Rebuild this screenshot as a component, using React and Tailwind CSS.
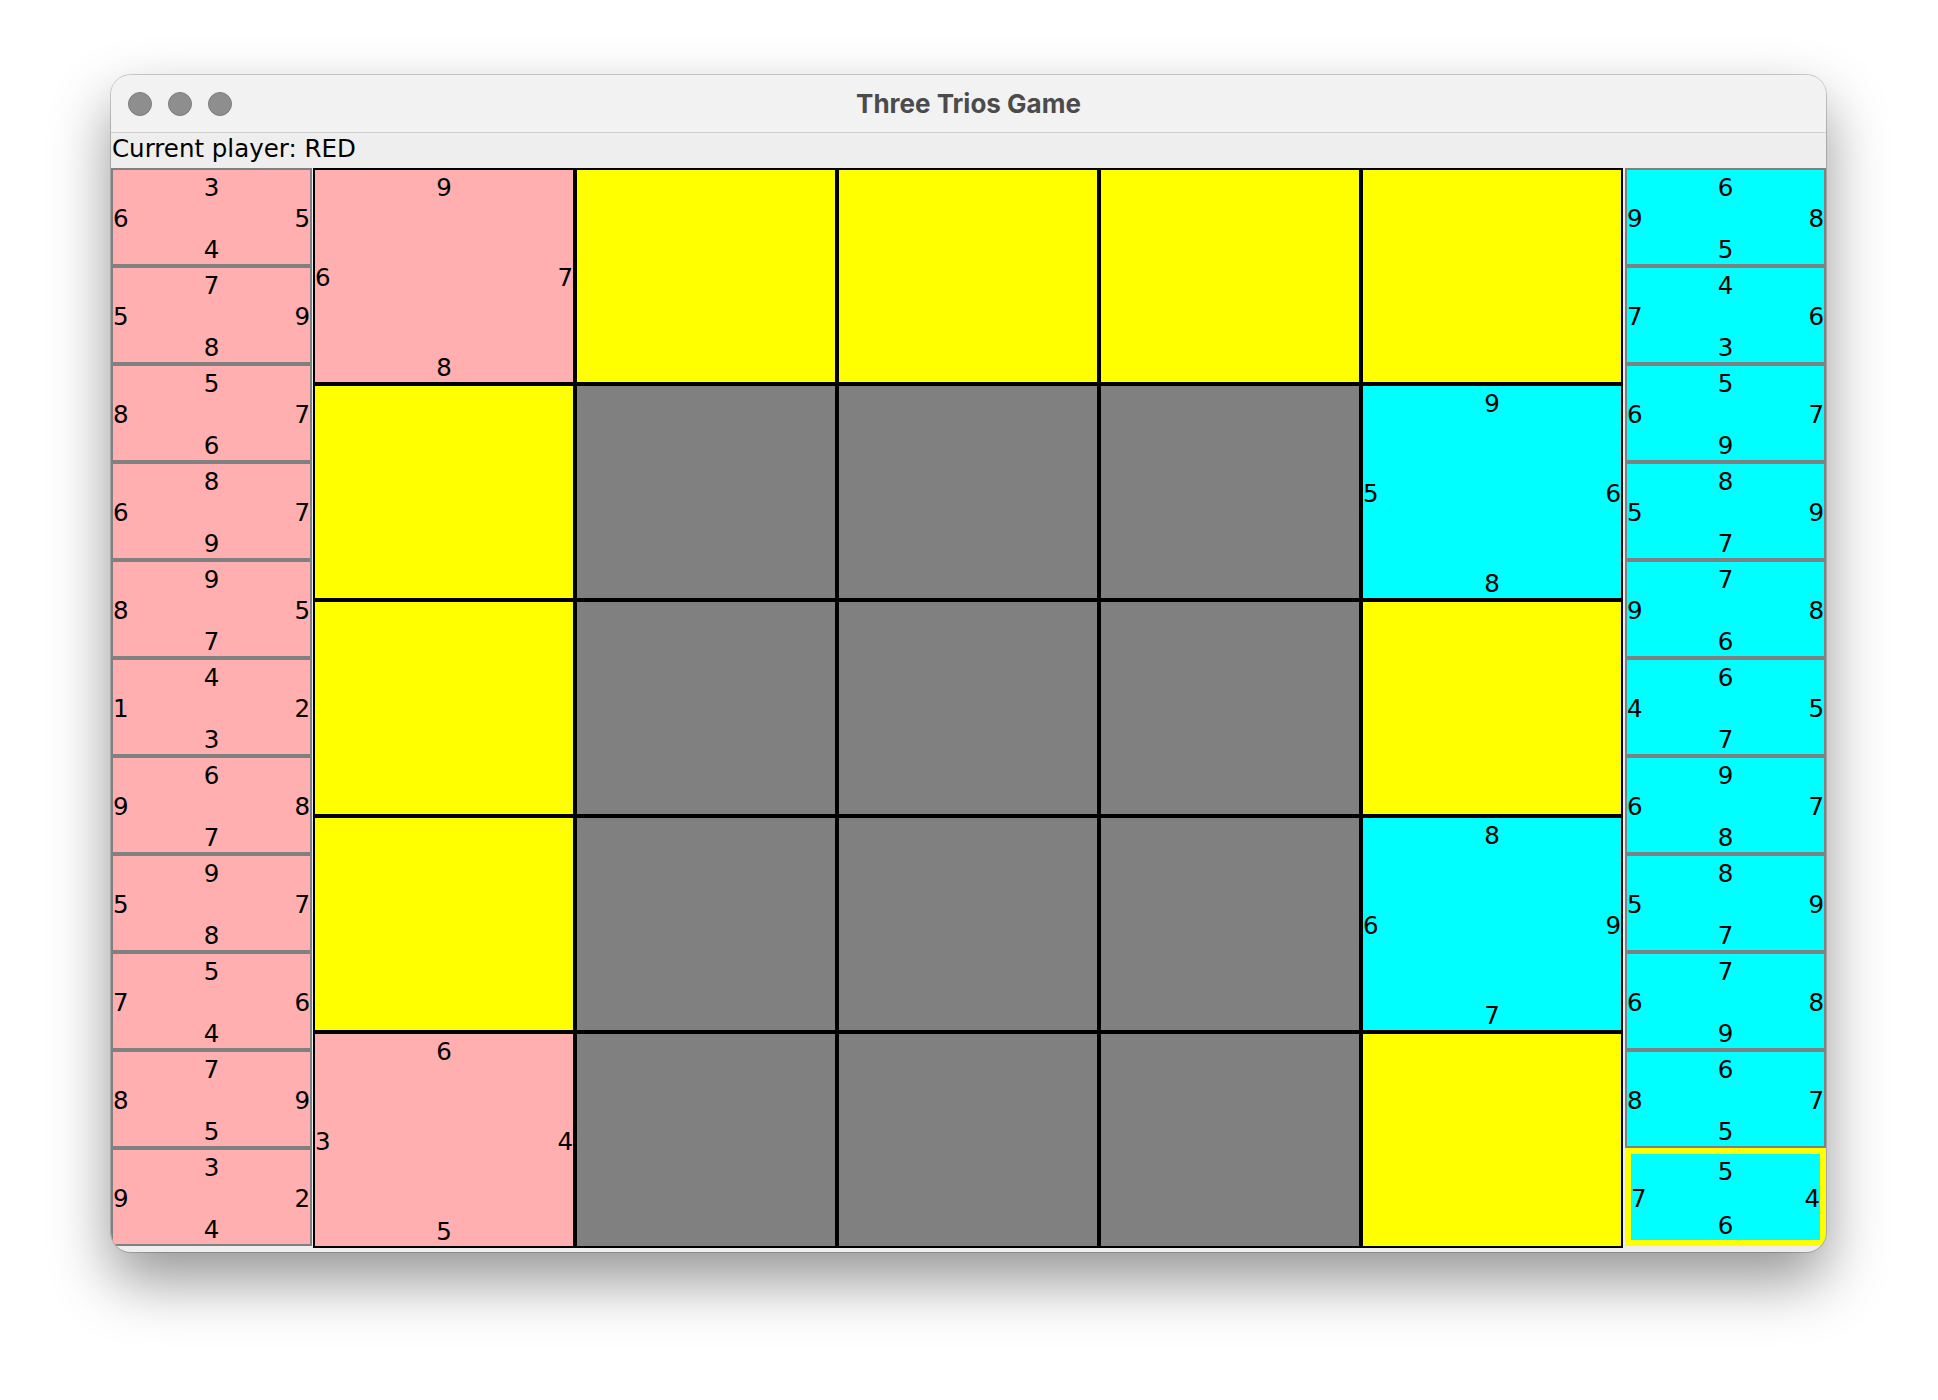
import React from "react";

const RED = "bg-[#ffafaf]";
const BLUE = "bg-[#00ffff]";

const leftHand = [
  [3, 6, 5, 4],
  [7, 5, 9, 8],
  [5, 8, 7, 6],
  [8, 6, 7, 9],
  [9, 8, 5, 7],
  [4, 1, 2, 3],
  [6, 9, 8, 7],
  [9, 5, 7, 8],
  [5, 7, 6, 4],
  [7, 8, 9, 5],
  [3, 9, 2, 4],
];

const rightHand = [
  [6, 9, 8, 5],
  [4, 7, 6, 3],
  [5, 6, 7, 9],
  [8, 5, 9, 7],
  [7, 9, 8, 6],
  [6, 4, 5, 7],
  [9, 6, 7, 8],
  [8, 5, 9, 7],
  [7, 6, 8, 9],
  [6, 8, 7, 5],
  [5, 7, 4, 6],
];

const board = [
  [{ r: [9, 6, 7, 8] }, "Y", "Y", "Y", "Y"],
  ["Y", "G", "G", "G", { b: [9, 5, 6, 8] }],
  ["Y", "G", "G", "G", "Y"],
  ["Y", "G", "G", "G", { b: [8, 6, 9, 7] }],
  [{ r: [6, 3, 4, 5] }, "G", "G", "G", "Y"],
];

function Numbers({ v }) {
  const [n, w, e, s] = v;
  return (
    <div className="flex h-full w-full flex-col justify-between pt-[6px] pb-[2px] text-[24.5px] leading-[24px] text-black">
      <div className="text-center">{n}</div>
      <div className="flex justify-between">
        <span>{w}</span>
        <span>{e}</span>
      </div>
      <div className="text-center">{s}</div>
    </div>
  );
}

function HandCard({ v, color, selected }) {
  const cls = selected
    ? "h-[98px] flex-none border-[6px] border-[#ffff00] " + color
    : "h-[98px] flex-none border-2 border-[#808080] " + color;
  return (
    <div className={cls}>
      <Numbers v={v} />
    </div>
  );
}

function BoardCell({ cell }) {
  if (cell === "Y") return <div className="border-2 border-black bg-[#ffff00]" />;
  if (cell === "G") return <div className="border-2 border-black bg-[#808080]" />;
  if (cell.r)
    return (
      <div className="border-2 border-black bg-[#ffafaf]">
        <Numbers v={cell.r} />
      </div>
    );
  return (
    <div className="border-2 border-black bg-[#00ffff]">
      <Numbers v={cell.b} />
    </div>
  );
}

export default function App() {
  return (
    <div className="min-h-[1400px] w-[1938px] bg-white pt-[75px] pl-[111px]" style={{ fontFamily: "'DejaVu Sans', sans-serif" }}>
      <div className="w-[1715px] h-[1177px] overflow-hidden rounded-[20px] bg-[#eeeeee] shadow-[0_28px_60px_rgba(0,0,0,0.42),0_0_0_1px_rgba(0,0,0,0.18)]">
        {/* title bar */}
        <div className="relative flex h-[58px] items-center border-b border-[#cfcfcf] bg-[#f2f2f2]">
          <div className="flex gap-[16px] pl-[17px]">
            <div className="h-[24px] w-[24px] rounded-full border border-[#7d7d7d] bg-[#8e8e8e]" />
            <div className="h-[24px] w-[24px] rounded-full border border-[#7d7d7d] bg-[#8e8e8e]" />
            <div className="h-[24px] w-[24px] rounded-full border border-[#7d7d7d] bg-[#8e8e8e]" />
          </div>
          <div
            className="absolute inset-x-0 top-0 flex h-[57px] items-center justify-center text-[26px] font-bold text-[#4b4b4b]"
            style={{ fontFamily: "Inter, 'Liberation Sans', sans-serif" }}
          >
            Three Trios Game
          </div>
        </div>
        {/* label */}
        <div className="h-[35px] pl-[1px] text-[24.5px] leading-[32px] text-black">Current player: RED</div>
        {/* body */}
        <div className="flex items-start">
          <div className="flex h-[1078px] w-[201px] flex-col">
            {leftHand.map((v, i) => (
              <HandCard key={i} v={v} color={RED} />
            ))}
          </div>
          <div className="ml-[1px] grid h-[1080px] w-[1310px] grid-cols-5 grid-rows-5">
            {board.flat().map((c, i) => (
              <BoardCell key={i} cell={c} />
            ))}
          </div>
          <div className="ml-[2px] flex h-[1078px] w-[201px] flex-col">
            {rightHand.map((v, i) => (
              <HandCard key={i} v={v} color={BLUE} selected={i === 10} />
            ))}
          </div>
        </div>
      </div>
    </div>
  );
}
